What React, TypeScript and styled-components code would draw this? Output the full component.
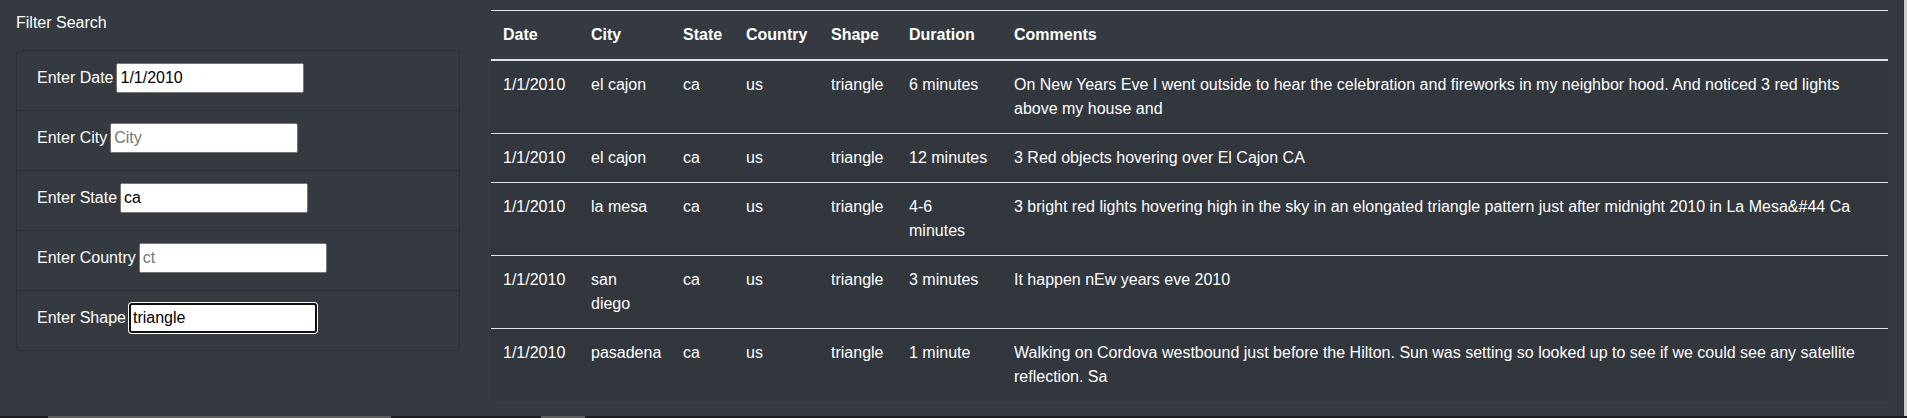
import React from "react";
import styled, { createGlobalStyle } from "styled-components";

const GlobalStyle = createGlobalStyle`
  *, *::before, *::after { box-sizing: border-box; }
  html, body {
    margin: 0;
    padding: 0;
    background: #343a40;
  }
  body {
    font-family: "Liberation Sans", Arial, sans-serif;
    font-size: 16px;
    line-height: 1.5;
    color: #ffffff;
    min-height: 100vh;
  }
`;

const Page = styled.div`
  display: flex;
  align-items: flex-start;
  gap: 31px;
  padding: 0 19px 0 16px;
  min-height: 100vh;
`;

const Sidebar = styled.aside`
  flex: none;
  width: 444px;
`;

const Title = styled.h2`
  margin: 0 0 15px;
  padding-top: 11px;
  font-size: 16px;
  font-weight: 400;
  line-height: 24px;
  color: #ffffff;
`;

const FilterList = styled.ul`
  list-style: none;
  margin: 0;
  padding: 0;
  border: 1px solid rgba(0, 0, 0, 0.14);
  border-radius: 4px;
`;

const FilterItem = styled.li`
  display: flex;
  align-items: center;
  gap: 3px;
  padding: 12px 20px 17px;
  & + & {
    border-top: 1px solid rgba(0, 0, 0, 0.14);
  }
`;

const Label = styled.label`
  color: #ffffff;
  line-height: 24px;
  white-space: nowrap;
`;

const Input = styled.input<{ $focused?: boolean }>`
  width: 188px;
  height: 30px;
  font-family: "Liberation Sans", Arial, sans-serif;
  font-size: 16px;
  color: #000000;
  background: #ffffff;
  border: ${(p) => (p.$focused ? "2px solid #101010" : "1px solid #767676")};
  border-radius: ${(p) => (p.$focused ? "3px" : "2px")};
  box-shadow: ${(p) => (p.$focused ? "0 0 0 1px #ffffff" : "none")};
  padding: 0 ${(p) => (p.$focused ? "2px" : "3px")};
  outline: none;
  caret-color: #000000;
  &::placeholder {
    color: #757575;
  }
`;

const Main = styled.main`
  flex: 1;
  min-width: 0;
  padding-top: 10px;
`;

const Table = styled.table`
  width: 100%;
  border-collapse: collapse;
  table-layout: fixed;
`;

const HeadCell = styled.th`
  padding: 12px;
  text-align: left;
  font-weight: 700;
  vertical-align: bottom;
  border-top: 1px solid #dee2e6;
  border-bottom: 2px solid #dee2e6;
`;

const Body = styled.tbody`
  background: #32363d;
`;

const Cell = styled.td`
  padding: 12px;
  vertical-align: top;
  border-top: 1px solid #dee2e6;
`;

const ScrollRight = styled.div`
  position: fixed;
  top: 0;
  right: 0;
  bottom: 2px;
  width: 4px;
  border-left: 1px solid #2a2d31;
  background: #cdcdcd;
`;

const ScrollBottom = styled.div`
  position: fixed;
  left: 0;
  right: 0;
  bottom: 0;
  height: 2px;
  background: #1c1e21;
`;

const Thumb = styled.span<{ $left: number; $width: number }>`
  position: absolute;
  top: 0;
  bottom: 0;
  left: ${(p) => p.$left}px;
  width: ${(p) => p.$width}px;
  background: #5e5e5e;
`;

type Filter = { label: string; value?: string; placeholder?: string; focused?: boolean };

const filters: Filter[] = [
  { label: "Enter Date", value: "1/1/2010" },
  { label: "Enter City", placeholder: "City" },
  { label: "Enter State", value: "ca" },
  { label: "Enter Country", placeholder: "ct" },
  { label: "Enter Shape", value: "triangle", focused: true },
];

const columns = [
  { name: "Date", width: 88 },
  { name: "City", width: 92 },
  { name: "State", width: 63 },
  { name: "Country", width: 85 },
  { name: "Shape", width: 78 },
  { name: "Duration", width: 105 },
  { name: "Comments", width: undefined },
];

const rows = [
  [
    "1/1/2010",
    "el cajon",
    "ca",
    "us",
    "triangle",
    "6 minutes",
    "On New Years Eve I went outside to hear the celebration and fireworks in my neighbor hood. And noticed 3 red lights above my house and",
  ],
  ["1/1/2010", "el cajon", "ca", "us", "triangle", "12 minutes", "3 Red objects hovering over El Cajon CA"],
  [
    "1/1/2010",
    "la mesa",
    "ca",
    "us",
    "triangle",
    "4-6 minutes",
    "3 bright red lights hovering high in the sky in an elongated triangle pattern just after midnight 2010 in La Mesa&#44 Ca",
  ],
  ["1/1/2010", "san diego", "ca", "us", "triangle", "3 minutes", "It happen nEw years eve 2010"],
  [
    "1/1/2010",
    "pasadena",
    "ca",
    "us",
    "triangle",
    "1 minute",
    "Walking on Cordova westbound just before the Hilton. Sun was setting so looked up to see if we could see any satellite reflection. Sa",
  ],
];

export default function App() {
  return (
    <>
      <GlobalStyle />
      <Page>
        <Sidebar>
          <Title>Filter Search</Title>
          <FilterList>
            {filters.map((f) => (
              <FilterItem key={f.label}>
                <Label>{f.label}</Label>
                <Input
                  type="text"
                  defaultValue={f.value}
                  placeholder={f.placeholder}
                  $focused={f.focused}
                  autoFocus={f.focused}
                />
              </FilterItem>
            ))}
          </FilterList>
        </Sidebar>
        <Main>
          <Table>
            <colgroup>
              {columns.map((c) => (
                <col key={c.name} style={c.width ? { width: c.width } : undefined} />
              ))}
            </colgroup>
            <thead>
              <tr>
                {columns.map((c) => (
                  <HeadCell key={c.name}>{c.name}</HeadCell>
                ))}
              </tr>
            </thead>
            <Body>
              {rows.map((r, i) => (
                <tr key={i}>
                  {r.map((v, j) => (
                    <Cell key={j}>{v}</Cell>
                  ))}
                </tr>
              ))}
            </Body>
          </Table>
        </Main>
      </Page>
      <ScrollRight />
      <ScrollBottom>
        <Thumb $left={48} $width={343} />
        <Thumb $left={541} $width={44} />
      </ScrollBottom>
    </>
  );
}
